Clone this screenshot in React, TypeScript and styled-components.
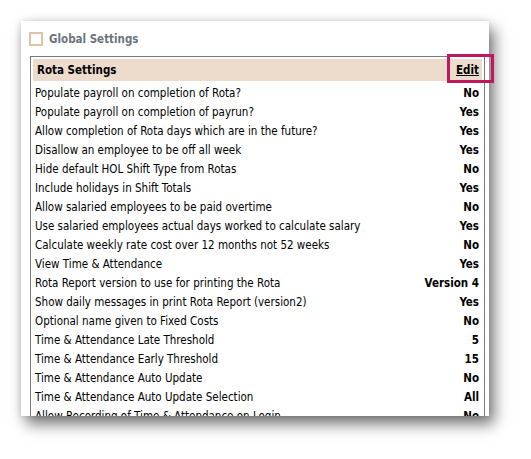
import styled, { createGlobalStyle } from "styled-components";

const GlobalStyle = createGlobalStyle`
  body {
    margin: 0;
    background: #ffffff;
    font-family: "DejaVu Sans Condensed", "DejaVu Sans", sans-serif;
  }
`;

const Page = styled.div`
  padding: 21px 0 0 21px;
  height: 459px;
  box-sizing: border-box;
`;

const Panel = styled.div`
  display: flex;
  flex-direction: column;
  width: 468px;
  height: 395px;
  background: #ffffff;
  box-sizing: border-box;
  padding: 10px 4px 0 8px;
  box-shadow: 5px 8px 14px rgba(0, 0, 0, 0.55), -1px 0 6px rgba(0, 0, 0, 0.12);
`;

const TitleRow = styled.div`
  display: flex;
  align-items: center;
  gap: 6px;
  height: 15px;
  margin-bottom: 10px;
`;

const Checkbox = styled.span`
  width: 14px;
  height: 14px;
  box-sizing: border-box;
  border: 2px solid #ddc4a8;
  background: #fff;
`;

const Title = styled.span`
  font-size: 11.5px;
  font-weight: bold;
  color: #6d737c;
`;

const Table = styled.div`
  display: flex;
  flex-direction: column;
  flex: 1;
  min-height: 0;
  margin-left: 1px;
  border: 1px solid #7a7a7a;
  border-bottom: none;
  padding: 2px 2px 0 2px;
`;

const Header = styled.div`
  position: relative;
  display: flex;
  align-items: center;
  justify-content: space-between;
  flex: none;
  height: 22px;
  margin-bottom: 2px;
  padding: 0 3px 0 4px;
  background: #eddccb;
  font-size: 11.5px;
  font-weight: bold;
  color: #000;
`;

const EditLink = styled.a`
  position: relative;
  color: #000;
  text-decoration: underline;
  cursor: pointer;
`;

const Highlight = styled.span`
  position: absolute;
  left: -9px;
  right: -15px;
  top: -9px;
  bottom: -6px;
  border: 3px solid #c0175d;
  pointer-events: none;
`;

const Body = styled.div`
  flex: 1;
  min-height: 0;
  overflow: hidden;
`;

const Row = styled.div`
  display: flex;
  align-items: center;
  justify-content: space-between;
  height: 19px;
  padding: 0 3px 0 2px;
  font-size: 11.5px;
  color: #000;
`;

const Value = styled.span`
  font-weight: bold;
`;

const settings: [string, string][] = [
  ["Populate payroll on completion of Rota?", "No"],
  ["Populate payroll on completion of payrun?", "Yes"],
  ["Allow completion of Rota days which are in the future?", "Yes"],
  ["Disallow an employee to be off all week", "Yes"],
  ["Hide default HOL Shift Type from Rotas", "No"],
  ["Include holidays in Shift Totals", "Yes"],
  ["Allow salaried employees to be paid overtime", "No"],
  ["Use salaried employees actual days worked to calculate salary", "Yes"],
  ["Calculate weekly rate cost over 12 months not 52 weeks", "No"],
  ["View Time & Attendance", "Yes"],
  ["Rota Report version to use for printing the Rota", "Version 4"],
  ["Show daily messages in print Rota Report (version2)", "Yes"],
  ["Optional name given to Fixed Costs", "No"],
  ["Time & Attendance Late Threshold", "5"],
  ["Time & Attendance Early Threshold", "15"],
  ["Time & Attendance Auto Update", "No"],
  ["Time & Attendance Auto Update Selection", "All"],
  ["Allow Recording of Time & Attendance on Login", "No"],
];

export default function App() {
  return (
    <>
      <GlobalStyle />
      <Page>
        <Panel>
          <TitleRow>
            <Checkbox />
            <Title>Global Settings</Title>
          </TitleRow>
          <Table>
            <Header>
              <span>Rota Settings</span>
              <EditLink>
                Edit
                <Highlight />
              </EditLink>
            </Header>
            <Body>
              {settings.map(([label, value]) => (
                <Row key={label}>
                  <span>{label}</span>
                  <Value>{value}</Value>
                </Row>
              ))}
            </Body>
          </Table>
        </Panel>
      </Page>
    </>
  );
}
